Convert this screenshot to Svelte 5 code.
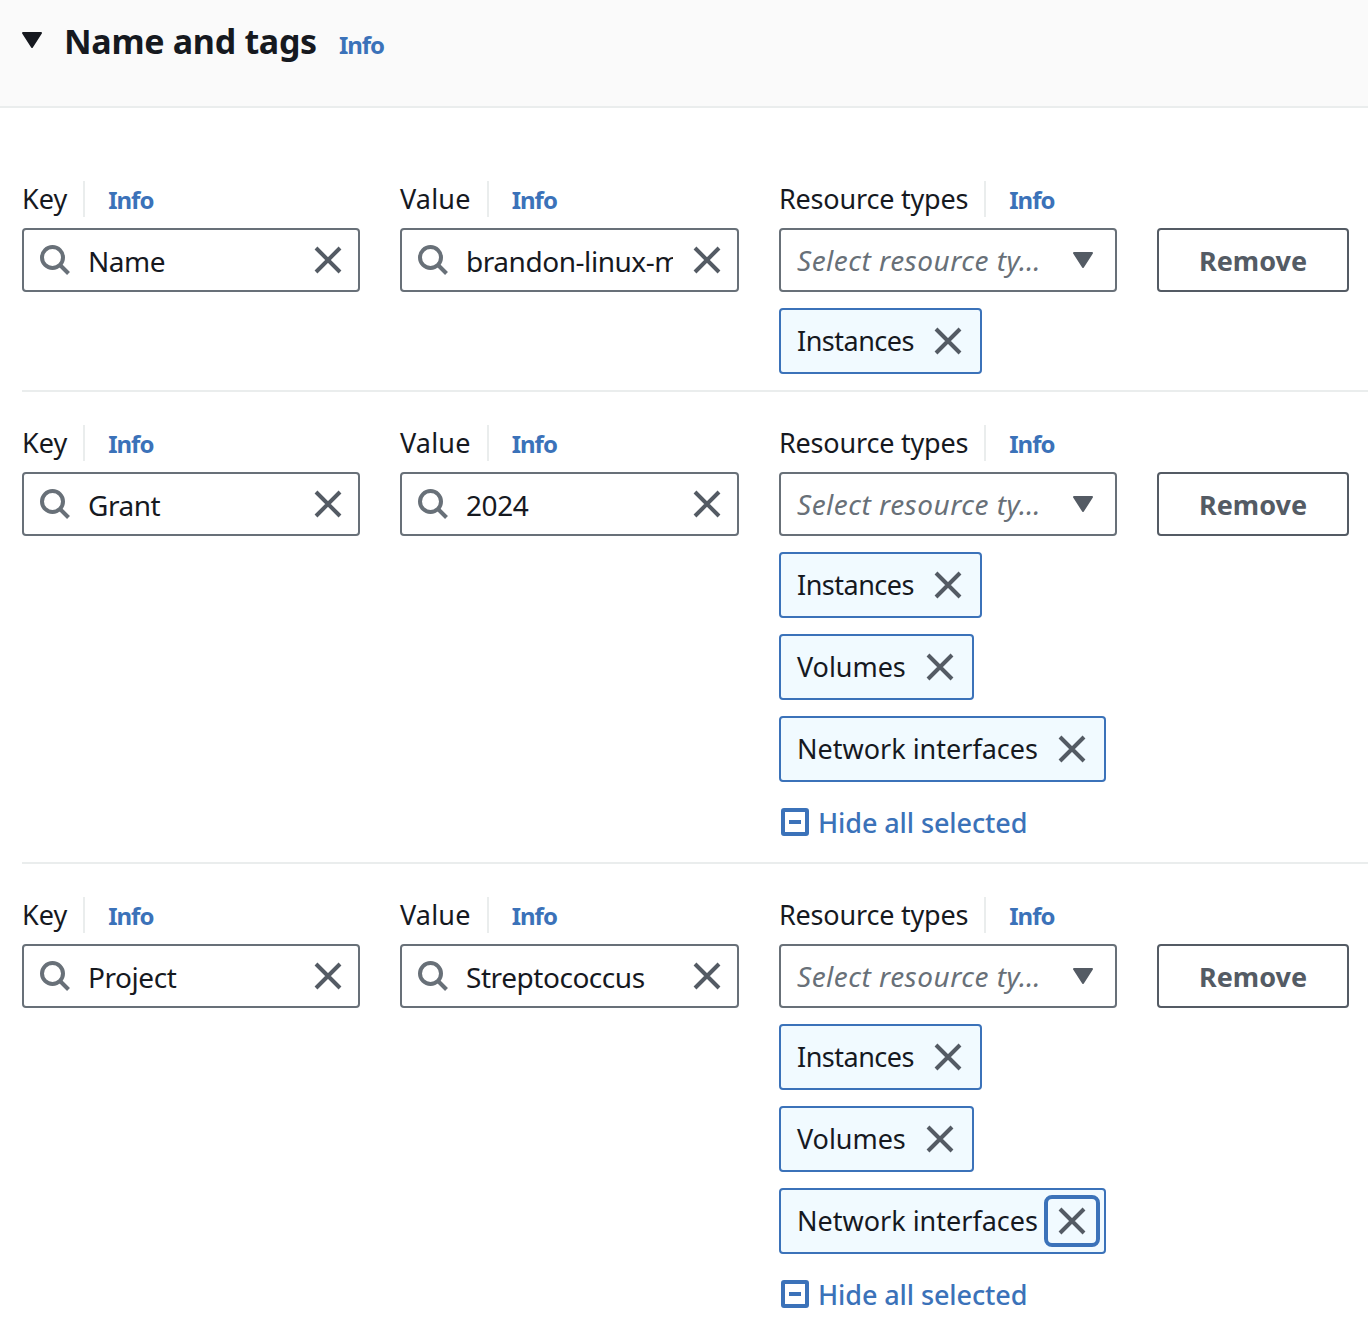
<script>
  const rows = [
    { key: 'Name', value: 'brandon-linux-machine', tokens: ['Instances'], hide: false, focus: -1 },
    { key: 'Grant', value: '2024', tokens: ['Instances', 'Volumes', 'Network interfaces'], hide: true, focus: -1 },
    { key: 'Project', value: 'Streptococcus', tokens: ['Instances', 'Volumes', 'Network interfaces'], hide: true, focus: 2 }
  ];
</script>

{#snippet x(cls)}
  <svg class={cls} viewBox="0 0 28 28" width="28" height="28" aria-hidden="true"><path d="M2 2 L26 26 M26 2 L2 26" /></svg>
{/snippet}

{#snippet label(text)}
  <div class="label"><span class="ltext">{text}</span><span class="info">Info</span></div>
{/snippet}

{#snippet search(text)}
  <div class="input">
    <svg class="mag" viewBox="0 0 30 30" width="30" height="30" aria-hidden="true"><circle cx="12.5" cy="12.5" r="10.5" /><path d="M20 20 L28.5 28.5" /></svg>
    <span class="val">{text}</span>
    {@render x('xi')}
  </div>
{/snippet}

<main>
  <header>
    <svg class="caret" viewBox="0 0 22 18" width="22" height="18" aria-hidden="true"><path d="M2 2 H20 L11 16 Z" /></svg>
    <h2>Name and tags</h2>
    <span class="hinfo">Info</span>
  </header>
  <section class="rows">
    {#each rows as r}
      <div class="row">
        <div class="col">
          {@render label('Key')}
          {@render search(r.key)}
        </div>
        <div class="col">
          {@render label('Value')}
          {@render search(r.value)}
        </div>
        <div class="col">
          {@render label('Resource types')}
          <div class="select">
            <span class="ph">Select resource ty…</span>
            <svg class="drop" viewBox="0 0 20 16" width="20" height="16" aria-hidden="true"><path d="M1 1 H19 L10 15 Z" /></svg>
          </div>
          {#each r.tokens as t, j}
            <div class="token">
              <span class="tname tk{j}">{t}</span>
              <span class="tx" class:focus={r.focus === j}>{@render x('xi')}</span>
            </div>
          {/each}
          {#if r.hide}
            <div class="hide">
              <svg viewBox="0 0 28 28" width="28" height="28" aria-hidden="true"><rect x="2" y="2" width="24" height="24" rx="1" /><path d="M8 14 H20" /></svg>
              <span>Hide all selected</span>
            </div>
          {/if}
        </div>
        <div class="col btncol"><button type="button">Remove</button></div>
      </div>
    {/each}
  </section>
</main>

<style>
  :global(body) { margin: 0; background: #fff; }
  main { width: 1368px; height: 1326px; overflow: hidden; font-family: "Noto Sans", "Open Sans", sans-serif; color: #16191f; font-size: 28px; }
  header { height: 106px; background: #fafafa; border-bottom: 2px solid #eaeded; display: flex; align-items: flex-start; padding-left: 21px; }
  .caret { margin-top: 31px; fill: #16191f; stroke: #16191f; stroke-width: 2; stroke-linejoin: round; }
  h2 { margin: 18px 0 0 21px; font-size: 34px; line-height: 46px; font-weight: 700; letter-spacing: -0.3px; }
  .hinfo { margin: 29px 0 0 22px; font-size: 24px; line-height: 32px; font-weight: 700; color: #3b72b9; letter-spacing: -1px; }
  .rows { padding: 72px 0 0 22px; }
  .row { display: flex; gap: 40px; border-bottom: 2px solid #eaeded; padding-bottom: 16px; margin-bottom: 32px; }
  .row:last-child { border-bottom: 0; }
  .col { width: 338px; flex: none; }
  .col:nth-child(2) { width: 339px; }
  .btncol { width: 192px; padding-top: 48px; }
  .label { display: flex; align-items: center; height: 36px; margin: 1px 0 11px; }
  .ltext { font-size: 27px; line-height: 36px; padding-right: 16px; border-right: 2px solid #eaeded; }
  .col:nth-child(2) .ltext { letter-spacing: 0.2px; }
  .col:nth-child(3) .ltext { letter-spacing: -0.2px; }
  .info { font-size: 24px; font-weight: 700; color: #3b72b9; margin-left: 23px; letter-spacing: -1px; }
  .input, .select { height: 64px; box-sizing: border-box; border: 2px solid #687078; border-radius: 4px; display: flex; align-items: center; padding: 0 16px; background: #fff; }
  .mag { flex: none; fill: none; stroke: #687078; stroke-width: 4; margin-right: 18px; }
  .val { flex: 1; min-width: 0; overflow: hidden; white-space: nowrap; font-size: 28px; letter-spacing: -0.45px; margin-right: 20px; padding-top: 2px; }
  .xi { flex: none; fill: none; stroke: #545b64; stroke-width: 4; display: block; }
  .select { justify-content: space-between; padding-right: 22px; }
  .ph { font-style: italic; color: #687078; font-size: 28px; letter-spacing: 0.5px; white-space: nowrap; }
  .drop { fill: #545b64; stroke: #545b64; stroke-width: 2; stroke-linejoin: round; }
  .token { display: flex; width: fit-content; height: 66px; box-sizing: border-box; margin-top: 16px; border: 2px solid #3b72b9; border-radius: 4px; background: #f1faff; align-items: center; padding: 0 4px 0 16px; }
  .tname { font-size: 27px; white-space: nowrap; margin-right: 8px; padding-bottom: 2px; }
  .tk0 { letter-spacing: -0.5px; }
  .tk1 { letter-spacing: -0.05px; }
  .tk2 { letter-spacing: 0; }
  .tx { width: 54px; height: 52px; box-sizing: border-box; display: flex; align-items: center; justify-content: center; border: 4px solid transparent; border-radius: 8px; padding-right: 2px; }
  .tx.focus { border-color: #3b72b9; width: 56px; margin-left: -2px; padding-right: 0; }
  .hide { display: flex; align-items: center; gap: 9px; height: 40px; margin: 20px 0 4px; color: #3b72b9; font-size: 27px; font-weight: 500; letter-spacing: -0.1px; }
  .hide svg { fill: none; stroke: #3b72b9; stroke-width: 4; margin-left: 2px; }
  button { width: 192px; height: 64px; background: #fff; border: 2px solid #545b64; border-radius: 4px; font: 700 27px "Noto Sans", "Open Sans", sans-serif; color: #545b64; padding: 0; }
</style>
